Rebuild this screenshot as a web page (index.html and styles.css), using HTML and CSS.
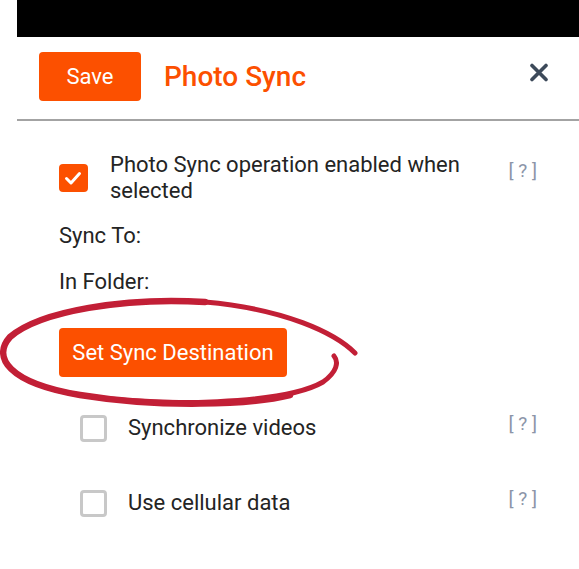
FILE: index.html
```html
<!DOCTYPE html>
<html>
<head>
<meta charset="utf-8">
<link rel="stylesheet" href="styles.css">
</head>
<body>
<div class="modal">
  <div class="topbar"></div>
  <div class="header">
    <button class="btn btn-save">Save</button>
    <h1 class="title">Photo Sync</h1>
    <svg class="close" width="18" height="19" viewBox="0 0 18 19">
      <path d="M2 2.5 L16 16.5 M16 2.5 L2 16.5" stroke="#3d4a5a" stroke-width="3.6" stroke-linecap="round" fill="none"/>
    </svg>
  </div>
  <div class="content">
    <div class="row-main">
      <span class="cb cb-on">
        <svg width="28" height="28" viewBox="0 0 28 28"><path d="M7.5 14.5 L12 19 L20.5 9.5" stroke="#fff" stroke-width="3" stroke-linecap="round" stroke-linejoin="round" fill="none"/></svg>
      </span>
      <p class="main-label">Photo Sync operation enabled when selected</p>
      <span class="help help-main">[ ? ]</span>
    </div>
    <p class="field">Sync To:</p>
    <p class="field field-folder">In Folder:</p>
    <button class="btn btn-dest">Set Sync Destination</button>
    <div class="row-opt">
      <span class="cb cb-off"></span>
      <span class="opt-label">Synchronize videos</span>
      <span class="help">[ ? ]</span>
    </div>
    <div class="row-opt row-opt2">
      <span class="cb cb-off"></span>
      <span class="opt-label">Use cellular data</span>
      <span class="help">[ ? ]</span>
    </div>
  </div>
</div>
<svg class="annot" width="579" height="569" viewBox="0 0 579 569">
  <path d="M355 353 C 335 333, 285 309, 205 302 C 125 297, 40 311, 10 337 C -8 357, 8 383, 80 395 C 160 408, 285 404, 323 382 C 337 372, 339 362, 334 356"
        stroke="#c21f36" stroke-width="5" fill="none" stroke-linecap="round"/>
  <path d="M205 302 C 125 297, 40 311, 10 337 C -8 357, 8 383, 80 395 C 160 408, 250 405, 290 395"
        stroke="#c21f36" stroke-width="6.5" fill="none" stroke-linecap="round"/>
</svg>
</body>
</html>
```
FILE: styles.css
```css
* { box-sizing: border-box; }
html, body { margin: 0; padding: 0; background: #fff; }
body {
  font-family: Roboto, "Noto Sans", Arial, sans-serif;
  color: #242424;
  width: 579px;
  height: 569px;
  overflow: hidden;
  position: relative;
}
.modal { margin-left: 17px; }
.topbar { height: 37px; background: #000; }
.header {
  display: flex;
  align-items: center;
  padding: 15px 31px 18px 22px;
  border-bottom: 2px solid #a3a3a3;
}
.btn {
  border: none;
  background: #fc5000;
  color: #fff;
  font-family: Roboto, Arial, sans-serif;
  font-size: 22px;
  border-radius: 4px;
  padding: 0;
}
.btn-save { width: 102px; height: 49px; margin-right: 23px; }
.title {
  flex: 1;
  margin: 0;
  font-size: 28px;
  font-weight: 500;
  color: #fc5000;
  line-height: 30px;
}
.close { display: block; margin-top: -8px; }
.content { padding: 31px 42px 0 42px; }
.row-main { display: flex; align-items: flex-start; }
.cb {
  display: block;
  flex: none;
  width: 28px;
  height: 28px;
  border-radius: 4px;
}
.cb-on { background: #fc5000; margin: 12px 22px 0 0; width: 29px; }
.cb-on svg { display: block; }
.main-label {
  margin: 0;
  width: 370px;
  font-size: 22px;
  line-height: 26px;
}
.help {
  margin-left: auto;
  color: #8c95a8;
  font-size: 19px;
  white-space: nowrap;
}
.help-main { margin-top: 7px; }
.field { margin: 19px 0 0 0; font-size: 22px; line-height: 26px; }
.field-folder { margin-top: 20px; }
.btn-dest { display: block; width: 228px; height: 49px; margin-top: 33px; }
.row-opt {
  display: flex;
  align-items: center;
  margin-top: 38px;
  height: 26px;
}
.row-opt2 { margin-top: 49px; }
.cb-off {
  width: 27px;
  height: 27px;
  border: 3px solid #c8c8c8;
  margin: 0 21px 0 21px;
}
.opt-label { font-size: 22px; line-height: 26px; }
.row-opt .help { margin-top: -10px; }
.annot { position: absolute; left: 0; top: 0; pointer-events: none; }
```
